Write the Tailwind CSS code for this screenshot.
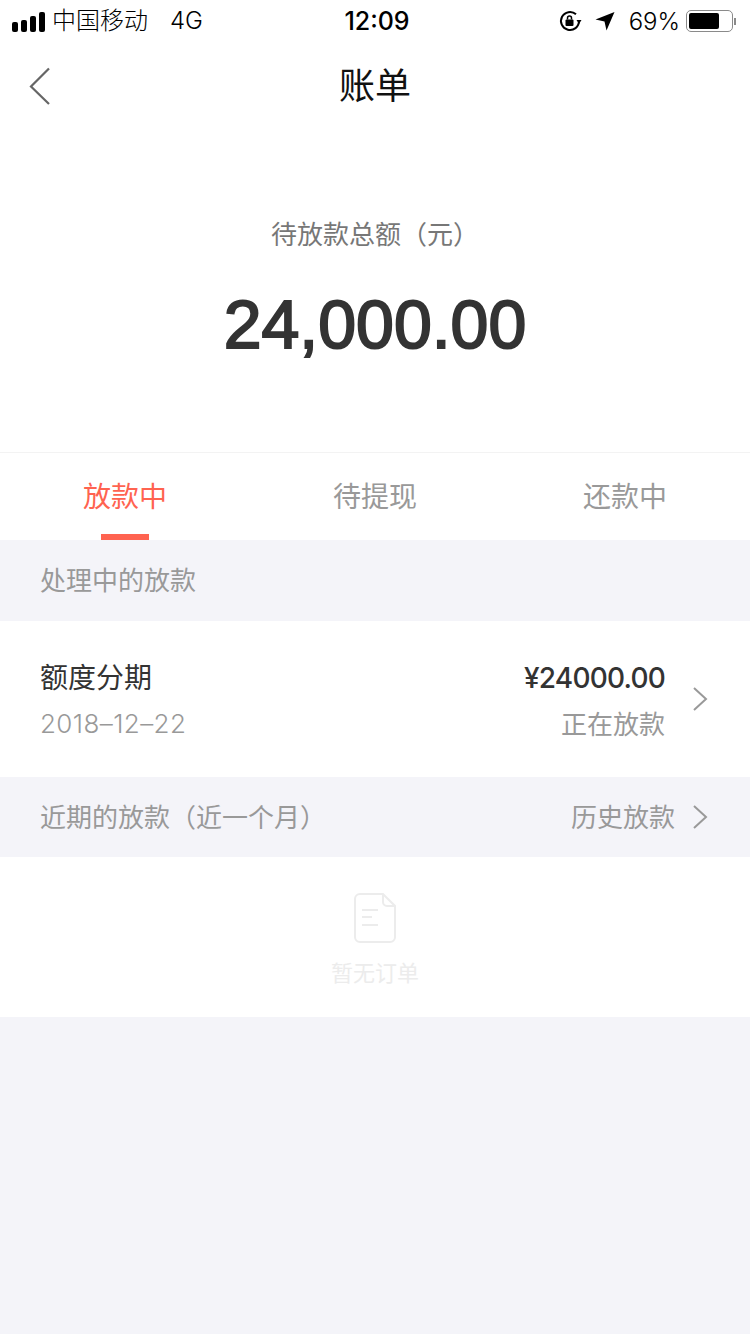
<!DOCTYPE html>
<html lang="zh">
<head>
    <meta charset="UTF-8" />
    <meta name="viewport" content="width=device-width, initial-scale=1.0" />
    <title>账单</title>
    <script src="https://cdn.jsdelivr.net/npm/@tailwindcss/browser@4"></script>
</head>
<body class="bg-[#f4f4f9] font-['Inter','Noto_Sans_CJK_SC',sans-serif] text-[#333]">
    <div class="w-[750px] h-[1334px] flex flex-col overflow-hidden">

        <!-- Status bar -->
        <div class="h-[40px] bg-white grid grid-cols-[1fr_auto_1fr] items-center pl-[12px] pr-[14px] text-black text-[24px] leading-[40px]">
            <div class="flex items-center">
                <div class="flex items-end gap-[3px] w-[34px] h-[20px] mt-[1px]">
                    <span class="w-[6px] h-[10px] rounded-[2px] bg-black"></span>
                    <span class="w-[6px] h-[12px] rounded-[2px] bg-black"></span>
                    <span class="w-[6px] h-[16px] rounded-[2px] bg-black"></span>
                    <span class="w-[6px] h-[20px] rounded-[2px] bg-black"></span>
                </div>
                <span class="ml-[6px] font-light">中国移动</span>
                <span class="ml-[22px] font-light">4G</span>
            </div>
            <span class="ml-[6px] text-[25px] font-medium">12:09</span>
            <div class="flex items-center justify-end">
                <svg class="w-[24px] h-[24px]" viewBox="0 0 24 24" fill="none">
                    <path d="M21 12a9 9 0 1 1-3-6.7" stroke="#000" stroke-width="2"/>
                    <path d="M23.5 11h-5l2.5 4z" fill="#000"/>
                    <rect x="7.5" y="10.5" width="8" height="6.5" rx="1" fill="#000"/>
                    <path d="M9.5 10.5V9a2 2 0 0 1 4 0v1.5" stroke="#000" stroke-width="1.5"/>
                </svg>
                <svg class="ml-[13px] w-[20px] h-[20px]" viewBox="0 0 20 20">
                    <path d="M19.5 1 11.5 19.5 9.5 10.5 .5 8.5z" fill="#000"/>
                </svg>
                <span class="ml-[14px] mt-[2px] text-[24px] font-light">69%</span>
                <div class="ml-[6px] flex items-center">
                    <div class="w-[47px] h-[22px] rounded-[5px] border-[1.5px] border-[#8a8a8a] p-[2px]">
                        <div class="w-[30px] h-full rounded-[2px] bg-black"></div>
                    </div>
                    <span class="ml-[1px] w-[2px] h-[7px] bg-[#8a8a8a]"></span>
                </div>
            </div>
        </div>

        <!-- Nav bar -->
        <div class="relative h-[92px] bg-white flex items-center justify-center">
            <svg class="absolute left-[28px] top-[27px] w-[24px] h-[38px]" viewBox="0 0 24 38" fill="none">
                <path d="M21 1.5 3 19.5 21 37" stroke="#666" stroke-width="2.2"/>
            </svg>
            <span class="text-[36px] leading-none text-[#111]">账单</span>
        </div>

        <!-- Total -->
        <div class="h-[321px] bg-white flex flex-col items-center border-b border-[#f3f3f3]">
            <div class="mt-[87px] text-[26px] leading-[32px] text-[#777]">待放款总额（元）</div>
            <div class="mt-[33px] font-['Liberation_Sans',sans-serif] text-[68px] leading-[80px] [-webkit-text-stroke:2px_#333] text-[#333]">24,000.00</div>
        </div>

        <!-- Tabs -->
        <div class="h-[87px] bg-white grid grid-cols-3 text-center text-[28px]">
            <div class="relative pt-[26px] leading-[36px] text-[#ff6350]">
                放款中
                <span class="absolute left-[101px] bottom-0 w-[48px] h-[6px] bg-[#ff6350]"></span>
            </div>
            <div class="pt-[26px] leading-[36px] text-[#999]">待提现</div>
            <div class="pt-[26px] leading-[36px] text-[#999]">还款中</div>
        </div>

        <!-- Processing -->
        <div class="h-[81px] pl-[40px] flex items-center text-[26px] text-[#999]">处理中的放款</div>
        <div class="h-[156px] bg-white flex items-center pl-[40px] pr-[42px]">
            <div class="flex-1 pt-[4px]">
                <div class="text-[28px] leading-[36px] text-[#333]">额度分期</div>
                <div class="mt-[10px] text-[26px] leading-[36px] font-light tracking-[0.4px] text-[#999]">2018–12–22</div>
            </div>
            <div class="text-right pt-[4px]">
                <div class="text-[28px] leading-[36px] font-medium tracking-[-0.8px] text-[#333]">¥24000.00</div>
                <div class="mt-[11px] text-[26px] leading-[36px] text-[#999]">正在放款</div>
            </div>
            <svg class="ml-[27px] w-[16px] h-[26px]" viewBox="0 0 16 26" fill="none">
                <path d="M2 2 14 13 2 24" stroke="#999" stroke-width="2"/>
            </svg>
        </div>

        <!-- Recent -->
        <div class="h-[80px] pl-[40px] pr-[42px] flex items-center justify-between text-[26px] text-[#999]">
            <span>近期的放款（近一个月）</span>
            <div class="flex items-center">
                <span>历史放款</span>
                <svg class="ml-[17px] w-[16px] h-[26px]" viewBox="0 0 16 26" fill="none">
                    <path d="M2 2 14 13 2 24" stroke="#999" stroke-width="2"/>
                </svg>
            </div>
        </div>

        <!-- Empty -->
        <div class="h-[160px] bg-white flex flex-col items-center">
            <svg class="mt-[36px] w-[42px] h-[50px]" viewBox="0 0 42 50" fill="none" stroke="#ececec" stroke-width="2">
                <path d="M6 1h23l12 12v31a5 5 0 0 1-5 5H6a5 5 0 0 1-5-5V6a5 5 0 0 1 5-5z"/>
                <path d="M29 1v8a4 4 0 0 0 4 4h8"/>
                <path d="M8 17h16M8 24h10M8 32h16"/>
            </svg>
            <div class="mt-[15px] text-[22px] leading-[30px] text-[#ececec]">暂无订单</div>
        </div>
    </div>
</body>
</html>
